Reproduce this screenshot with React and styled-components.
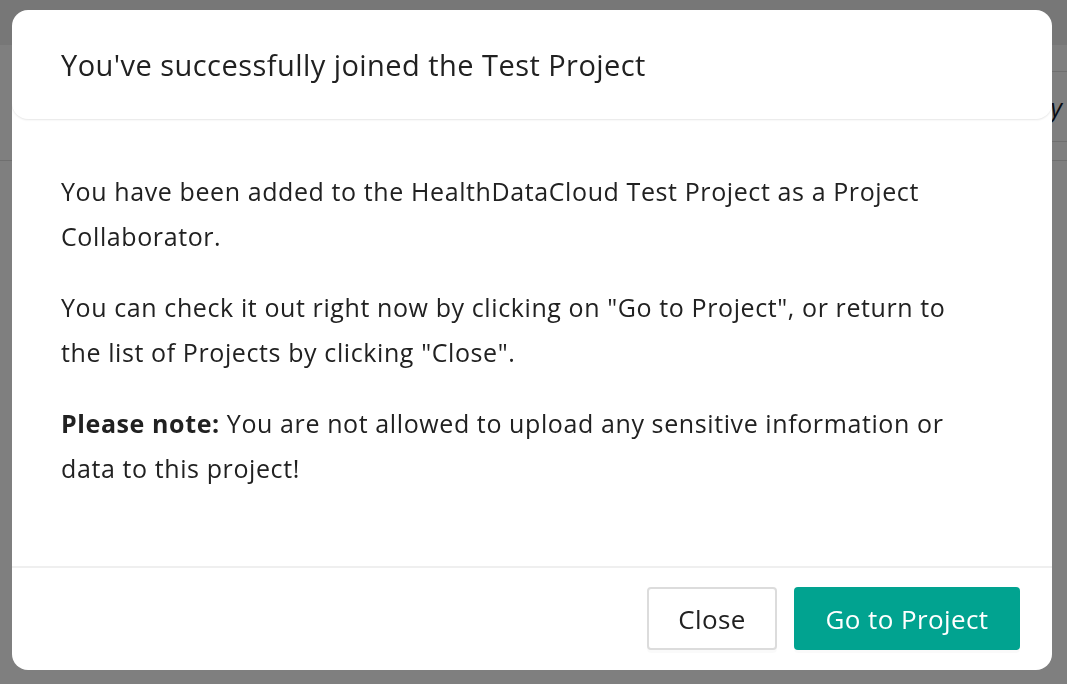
import styled, { createGlobalStyle } from "styled-components";

// Global page reset
const GlobalStyle = createGlobalStyle`
  html, body {
    margin: 0;
    padding: 0;
    height: 100%;
  }
  body {
    font-family: "Open Sans", "Noto Sans", Arial, sans-serif;
    color: #212121;
    overflow: hidden;
  }
`;

// Page behind the dialog
const Page = styled.div`
  height: 100vh;
  background: #ffffff;
  display: flex;
  flex-direction: column;
`;

const PageHeader = styled.header`
  height: 45px;
  background: #eeeeee;
`;

const Toolbar = styled.div`
  height: 116px;
  border-bottom: 1px solid #dedede;
  display: flex;
  justify-content: flex-end;
  align-items: flex-start;
  padding-top: 26px;
  box-sizing: border-box;
`;

const SortBox = styled.div`
  width: 260px;
  height: 71px;
  border-top: 1px solid #dedede;
  border-bottom: 1px solid #dedede;
  display: flex;
  align-items: center;
  justify-content: flex-end;
  padding-right: 5px;
  box-sizing: border-box;
  font-size: 25px;
  font-style: italic;
  color: #101828;
`;

// Dialog
const Overlay = styled.div`
  position: fixed;
  inset: 0;
  background: rgba(0, 0, 0, 0.5);
  display: flex;
  align-items: flex-start;
  padding: 10px 0 0 12px;
`;

const Modal = styled.div`
  width: 1040px;
  height: 660px;
  background: #ffffff;
  border-radius: 16px;
  display: flex;
  flex-direction: column;
  overflow: hidden;
`;

const ModalHeader = styled.div`
  height: 109px;
  flex-shrink: 0;
  padding: 0 49px;
  display: flex;
  align-items: center;
  border-radius: 16px;
  box-shadow: 0 1px 2px rgba(0, 0, 0, 0.1);
`;

const Title = styled.h2`
  margin: 0;
  font-size: 29px;
  letter-spacing: 0.45px;
  font-weight: 400;
  color: #212121;
`;

const ModalBody = styled.div`
  flex: 1;
  padding: 50px 49px 0;
`;

const Paragraph = styled.p`
  margin: 0 0 26px;
  font-size: 25px;
  letter-spacing: 0.6px;
  line-height: 45px;
  color: #212121;
  max-width: 920px;
`;

const ModalFooter = styled.div`
  flex-shrink: 0;
  border-top: 2px solid #efefef;
  padding: 19px 32px 20px;
  display: flex;
  justify-content: flex-end;
  gap: 17px;
`;

const Button = styled.button`
  height: 63px;
  width: ${(props) => (props.$primary ? "226px" : "130px")};
  border-radius: 4px;
  border: ${(props) => (props.$primary ? "none" : "2px solid #dcdcdc")};
  background: ${(props) => (props.$primary ? "#01a390" : "#ffffff")};
  color: ${(props) => (props.$primary ? "#ffffff" : "#212121")};
  font-family: inherit;
  font-size: 26px;
  letter-spacing: 0.4px;
  box-shadow: 0 3px 0 rgba(0, 0, 0, 0.02);
  cursor: pointer;
`;

const App = () => {
  return (
    <>
      <GlobalStyle />
      <Page>
        <PageHeader />
        <Toolbar>
          <SortBox>Sort by</SortBox>
        </Toolbar>
      </Page>
      <Overlay>
        <Modal role="dialog">
          <ModalHeader>
            <Title>You've successfully joined the Test Project</Title>
          </ModalHeader>
          <ModalBody>
            <Paragraph>
              You have been added to the HealthDataCloud Test Project as a
              Project Collaborator.
            </Paragraph>
            <Paragraph>
              You can check it out right now by clicking on "Go to Project", or
              return to the list of Projects by clicking "Close".
            </Paragraph>
            <Paragraph>
              <strong>Please note:</strong> You are not allowed to upload any
              sensitive information or data to this project!
            </Paragraph>
          </ModalBody>
          <ModalFooter>
            <Button>Close</Button>
            <Button $primary>Go to Project</Button>
          </ModalFooter>
        </Modal>
      </Overlay>
    </>
  );
};

export default App;
